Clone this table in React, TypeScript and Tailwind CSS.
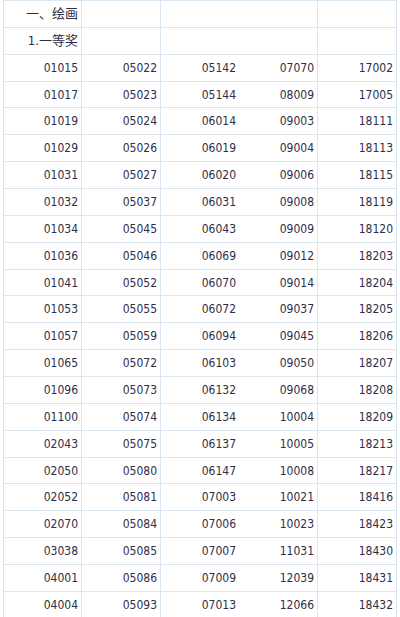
const col1 = ["01015","01017","01019","01029","01031","01032","01034","01036","01041","01053","01057","01065","01096","01100","02043","02050","02052","02070","03038","04001","04004"]
const col2 = ["05022","05023","05024","05026","05027","05037","05045","05046","05052","05055","05059","05072","05073","05074","05075","05080","05081","05084","05085","05086","05093"]
const col3 = ["05142","05144","06014","06019","06020","06031","06043","06069","06070","06072","06094","06103","06132","06134","06137","06147","07003","07006","07007","07009","07013"]
const col4 = ["07070","08009","09003","09004","09006","09008","09009","09012","09014","09037","09045","09050","09068","10004","10005","10008","10021","10023","11031","12039","12066"]
const col5 = ["17002","17005","18111","18113","18115","18119","18120","18203","18204","18205","18206","18207","18208","18209","18213","18217","18416","18423","18430","18431","18432"]

const rowCls = "grid grid-cols-[78px_79px_78px_79px_79px] h-[26.86px] border-b border-[#dae6f2]"
const cell = "flex items-center justify-end pr-[3px] border-r border-[#dae6f2]"
const cellOpen = "flex items-center justify-end pr-[3px]"

const Row = ({ vals }: { vals: React.ReactNode[] }) => (
  <div className={rowCls}>
    <div className={cell}>{vals[0]}</div>
    <div className={cell}>{vals[1]}</div>
    <div className={cellOpen}>{vals[2]}</div>
    <div className={cell}>{vals[3]}</div>
    <div className={cell}>{vals[4]}</div>
  </div>
)

const App = () => {
  return (
    <div className="min-h-screen bg-white pl-[3px]">
      <div
        className="w-fit border-l border-t border-[#dae6f2] text-[12px] text-[#2e2e48]"
        style={{ fontFamily: '"DejaVu Sans Condensed", "DejaVu Sans", "Noto Sans CJK SC", sans-serif' }}
      >
        <Row vals={[<span className="text-[13px]">一、绘画</span>, "", "", "", ""]} />
        <Row vals={[<span className="text-[13px]">1.一等奖</span>, "", "", "", ""]} />
        {col1.map((v, i) => (
          <Row key={v} vals={[v, col2[i], col3[i], col4[i], col5[i]]} />
        ))}
      </div>
    </div>
  )
}

export default App
